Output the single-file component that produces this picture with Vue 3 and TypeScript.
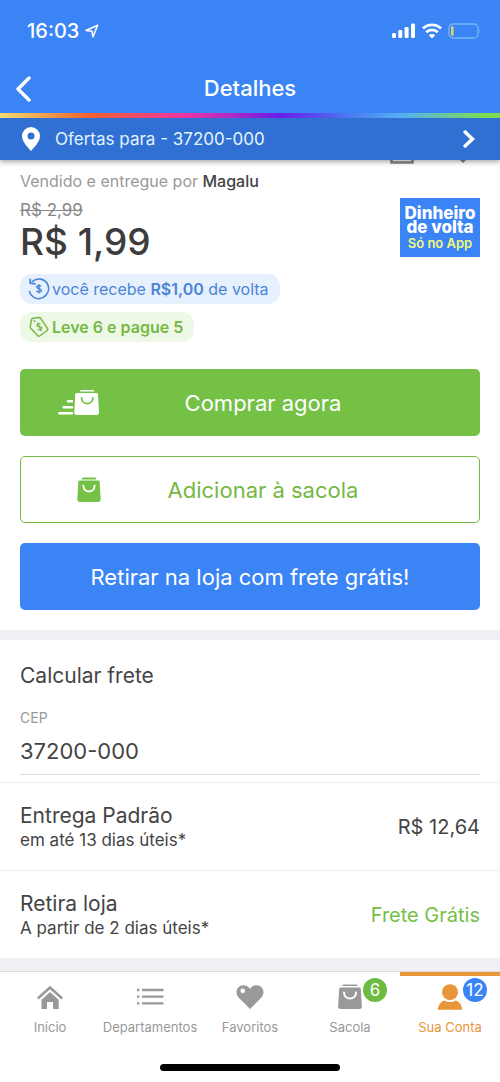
<script setup lang="ts">
import { ref } from 'vue'

interface Tab {
  id: string
  label: string
  badge?: number
  tone?: string
}

interface Shipping {
  name: string
  term: string
  price: string
  free: boolean
}

const cep = ref('37200-000')
const active = ref('conta')

const shipping: Shipping[] = [
  { name: 'Entrega Padrão', term: 'em até 13 dias úteis*', price: 'R$ 12,64', free: false },
  { name: 'Retira loja', term: 'A partir de 2 dias úteis*', price: 'Frete Grátis', free: true },
]

const tabs: Tab[] = [
  { id: 'inicio', label: 'Início' },
  { id: 'departamentos', label: 'Departamentos' },
  { id: 'favoritos', label: 'Favoritos' },
  { id: 'sacola', label: 'Sacola', badge: 6, tone: 'green' },
  { id: 'conta', label: 'Sua Conta', badge: 12, tone: 'blue' },
]
</script>

<template>
  <div class="app">
    <header class="header">
      <div class="status">
        <div class="clock">
          <span>16:03</span>
          <svg width="14" height="14" viewBox="0 0 14 14" aria-hidden="true">
            <path d="M1 6.4 12.6 1.2 8 12.8 6.9 7.2Z" fill="none" stroke="#fff" stroke-width="1.6" stroke-linejoin="round" />
          </svg>
        </div>
        <div class="signals">
          <svg width="24" height="16" viewBox="0 0 24 16" aria-hidden="true">
            <g fill="#fff">
              <rect x="0" y="10" width="4" height="5" rx="1.2" />
              <rect x="6.3" y="7" width="4" height="8" rx="1.2" />
              <rect x="12.6" y="4" width="4" height="11" rx="1.2" />
              <rect x="19" y="0.5" width="4" height="14.5" rx="1.2" />
            </g>
          </svg>
          <svg width="20" height="16" viewBox="0 0 20 16" aria-hidden="true">
            <g fill="none" stroke="#fff" stroke-width="2.8">
              <path d="M1 5.4a13 13 0 0 1 18 0" />
              <path d="M4.2 9.2a8.4 8.4 0 0 1 11.6 0" />
            </g>
            <path d="M10 15.400 6.800 12.200a4.600 4.600 0 0 1 6.400 0Z" fill="#fff" />
          </svg>
          <svg width="34" height="16" viewBox="0 0 34 16" aria-hidden="true">
            <rect x="1" y="1" width="29" height="14" rx="4" fill="none" stroke="#79b4f5" stroke-width="1.3" />
            <rect x="3" y="3.2" width="2.6" height="9.6" rx="1" fill="#d9cf78" />
            <path d="M31.6 5.5q1.6 2.5 0 5Z" fill="#79b4f5" />
          </svg>
        </div>
      </div>
      <div class="titlebar">
        <button class="back" type="button" aria-label="Voltar">
          <svg width="18" height="28" viewBox="0 0 18 28" aria-hidden="true">
            <path d="M15 4 4 15l11 11" fill="none" stroke="#fff" stroke-width="3.4" stroke-linecap="round" stroke-linejoin="round" />
          </svg>
        </button>
        <h1>Detalhes</h1>
        <span></span>
      </div>
      <div class="rainbow"></div>
      <a class="location" href="#cep">
        <svg width="20" height="26" viewBox="0 0 20 26" aria-hidden="true">
          <path fill="#fff" fill-rule="evenodd" d="M10 1a9 9 0 0 1 9 9c0 6-6.500 12-9 15.200C7.500 22 1 16 1 10a9 9 0 0 1 9-9Zm0 5.600a3.500 3.500 0 1 0 0 7 3.500 3.500 0 0 0 0-7Z" />
        </svg>
        <span class="place">Ofertas para - {{ cep }}</span>
        <svg width="14" height="22" viewBox="0 0 14 22" aria-hidden="true">
          <path d="m2 3 8.500 8L2 19" fill="none" stroke="#fff" stroke-width="3.400" />
        </svg>
      </a>
    </header>

    <main class="main">
      <section class="product">
        <div class="actions">
          <svg width="24" height="26" viewBox="0 0 24 26" aria-hidden="true">
            <path d="M1.500 10v14.500h21V10M12 17V2M7 7l5-5 5 5" fill="none" stroke="#82888d" stroke-width="2.500" />
          </svg>
          <svg width="26" height="24" viewBox="0 0 26 24" aria-hidden="true">
            <path d="M13 23 3 13C-2 6 7-2 13 5c6-7 15 1 10 8Z" fill="#82888d" />
          </svg>
        </div>
        <p class="seller">Vendido e entregue por <b>Magalu</b></p>
        <div class="pricing">
          <div>
            <s class="old">R$ 2,99</s>
            <p class="price">R$ 1,99</p>
          </div>
          <div class="promo">
            <span>Dinheiro<br />de volta</span>
            <em>Só no App</em>
          </div>
        </div>
        <div class="pills">
          <p class="pill cashback">
            <svg width="22" height="22" viewBox="0 0 22 22" aria-hidden="true">
              <path d="M3.800 3.800C9-.6 16.200.6 19.200 5.500c5 8.500-4.700 19.200-13.700 13.600Q2.200 17 1.300 12.800" fill="none" stroke="currentColor" stroke-width="1.600" />
              <path d="M2.200.8v4.400l5.600.8" fill="none" stroke="currentColor" stroke-width="1.700" />
              <path d="M13.200 8.500c-.5-1.200-4.400-1.700-4.400.4 0 2.300 4.600 1.100 4.600 3.600 0 2.200-4.300 1.900-4.900.2M11 6.300v9.200" fill="none" stroke="currentColor" stroke-width="1.400" />
            </svg>
            <span>você recebe <b>R$1,00</b> de volta</span>
          </p>
          <p class="pill deal">
            <svg width="22" height="22" viewBox="0 0 22 22" aria-hidden="true">
              <path d="M2.300 10.500 3.600 3.400q.3-1 1.300-1.200l6.300-.7q1 0 1.500.8l6.900 10.300q.7 1.100-.4 1.900l-7.600 5.500q-1.200.8-2-.4L2.700 12.200q-.5-.8-.4-1.700Z" fill="none" stroke="currentColor" stroke-width="1.500" stroke-linejoin="round" />
              <circle cx="6.500" cy="5" r="1" fill="currentColor" />
              <path d="M12.500 8.200c-1.200-1.300-4.200-.1-3.500 1.600.8 1.900 4.100-.2 4.800 1.900.6 1.900-2.800 3-4.100 1.400M9.500 6.500l3.800 8.800" fill="none" stroke="currentColor" stroke-width="1.200" />
            </svg>
            <b>Leve 6 e pague 5</b>
          </p>
        </div>
        <div class="buttons">
          <button class="btn buy" type="button">
            <svg width="42" height="28" viewBox="0 0 42 28" aria-hidden="true">
              <path d="M21.500 2.600q.2-1.600 1.800-1.600h11.400q1.600 0 1.800 1.600Z" fill="#fff" />
              <path d="M19.500 4h19q1.300 0 1.400 1.300l1.100 18.200q0 2.500-2.500 2.500H18.700q-2.500 0-2.400-2.500l1-18.200Q17.500 4 19.500 4Z" fill="#fff" />
              <path d="M23.500 9c.4 7.400 11 7.400 11.400 0" fill="none" stroke="#75c146" stroke-width="1.800" stroke-linecap="round" />
              <path d="M10 12.300h4M5.500 18.300h8.500M1.300 24.300h12.700" fill="none" stroke="#fff" stroke-width="2.400" stroke-linecap="round" />
            </svg>
            <span>Comprar agora</span>
          </button>
          <button class="btn add" type="button">
            <svg width="24" height="26" viewBox="0 0 24 26" aria-hidden="true">
              <path d="M4.500 2.400q.2-1.900 1.800-1.900h11.400q1.600 0 1.800 1.900Z" fill="#75c146" />
              <path d="M2.700 3.600h18.600q1.300 0 1.400 1.300l1 17.700q0 2.400-2.400 2.400H2.700q-2.400 0-2.400-2.400l1-17.700q.1-1.300 1.400-1.300Z" fill="#75c146" />
              <path d="M6.300 8.600c.4 7.800 11 7.800 11.400 0" fill="none" stroke="#fff" stroke-width="1.900" stroke-linecap="round" />
            </svg>
            <span>Adicionar à sacola</span>
          </button>
          <button class="btn pickup" type="button">Retirar na loja com frete grátis!</button>
        </div>
      </section>

      <section class="freight">
        <form class="calc" @submit.prevent>
          <h2>Calcular frete</h2>
          <label for="cep">CEP</label>
          <input id="cep" v-model="cep" type="text" inputmode="numeric" />
        </form>
        <ul>
          <li v-for="s in shipping" :key="s.name">
            <div>
              <strong>{{ s.name }}</strong>
              <small>{{ s.term }}</small>
            </div>
            <span class="cost" :class="{ free: s.free }">{{ s.price }}</span>
          </li>
        </ul>
      </section>
    </main>

    <footer class="footer">
      <nav class="tabs">
        <button v-for="t in tabs" :key="t.id" type="button" class="tab" :class="{ active: t.id === active }" @click="active = t.id">
          <span class="icon">
            <svg v-if="t.id === 'inicio'" width="28" height="26" viewBox="0 0 28 26" aria-hidden="true">
              <path d="m1.800 14.500 12.200-11 12.200 11" fill="none" stroke="currentColor" stroke-width="2.600" />
              <path d="m14 8 8.700 7.800V25H17v-7h-6v7H5.500v-9.200Z" fill="currentColor" />
            </svg>
            <svg v-else-if="t.id === 'departamentos'" width="28" height="26" viewBox="0 0 28 26" aria-hidden="true">
              <path d="M1 6h2.400M6 6h21.500M1 12.700h2.400M6 12.700h21.500M1 19.400h2.400M6 19.400h21.500" fill="none" stroke="currentColor" stroke-width="2.300" />
            </svg>
            <svg v-else-if="t.id === 'favoritos'" width="28" height="26" viewBox="0 0 28 26" aria-hidden="true">
              <path fill="currentColor" fill-rule="evenodd" d="M14 25 2.800 13.800C-1.800 8.500 1.300 1.300 7.300 1.300c3 0 5.200 1.400 6.700 3.600 1.500-2.200 3.700-3.600 6.700-3.600 6 0 9.100 7.200 4.500 12.500ZM6.700 4.400a2.400 2.400 0 1 0 0 4.800 2.400 2.400 0 0 0 0-4.800Z" />
            </svg>
            <svg v-else-if="t.id === 'sacola'" width="28" height="26" viewBox="0 0 28 26" aria-hidden="true">
              <path d="M6.300 1.900Q6.500.5 8 .5h12q1.500 0 1.700 1.400Z" fill="currentColor" />
              <path d="M4.700 3.500h18.600q1.300 0 1.500 1.300l1.100 17.700q0 2.500-2.500 2.500H4.600q-2.500 0-2.500-2.500L3.200 4.800q.2-1.300 1.500-1.300Z" fill="currentColor" />
              <path d="M8 8.600c.4 8 11.600 8 12 0" fill="none" stroke="#fff" stroke-width="2" stroke-linecap="round" />
            </svg>
            <svg v-else width="28" height="26" viewBox="0 0 28 26" aria-hidden="true">
              <circle cx="14" cy="8.200" r="8" fill="currentColor" />
              <path d="M1.800 25.800c.2-4.600 2.800-8 6.400-9.400q5.800 3 11.600 0c3.600 1.400 6.200 4.800 6.400 9.400Z" fill="currentColor" />
            </svg>
            <span v-if="t.badge" class="badge" :class="t.tone">{{ t.badge }}</span>
          </span>
          <span class="label">{{ t.label }}</span>
        </button>
      </nav>
      <div class="home"></div>
    </footer>
  </div>
</template>

<style>
body {
  margin: 0;
  background: #fff;
}
</style>

<style scoped>
.app {
  display: flex;
  flex-direction: column;
  min-height: 100vh;
  color: #444;
  font-family: Inter, "Liberation Sans", sans-serif;
  background: #fff;
}
h1, h2, p, ul {
  margin: 0;
  padding: 0;
  list-style: none;
}
svg {
  display: block;
  flex: none;
}
button, input {
  margin: 0;
  padding: 0;
  border: 0;
  background: none;
  color: inherit;
  font: inherit;
}
b {
  font-weight: 600;
}
.header {
  color: #fff;
  background: #3b84f5;
  box-shadow: 0 2px 5px rgba(0, 0, 0, 0.35);
  z-index: 1;
}
.status {
  display: flex;
  justify-content: space-between;
  align-items: center;
  height: 62px;
  padding: 0 18px 0 27px;
}
.clock {
  display: flex;
  align-items: center;
  gap: 6px;
  font-size: 20px;
  font-weight: 500;
}
.signals {
  display: flex;
  align-items: center;
  gap: 6px;
}
.titlebar {
  display: grid;
  grid-template-columns: 1fr auto 1fr;
  align-items: center;
  height: 51px;
  padding: 0 14px;
}
.back {
  justify-self: start;
}
h1 {
  font-size: 22px;
  line-height: 28px;
  font-weight: 500;
}
.rainbow {
  height: 5px;
  background: linear-gradient(90deg, #f0dc70, #f0612c 18%, #ee35a5 37%, #6a1ce8 56%, #4a80f2 71%, #56aef5 80%, #7cdc50 97%);
}
.location {
  display: flex;
  align-items: center;
  height: 42px;
  padding: 0 24px 0 21px;
  color: #e4f3ff;
  font-size: 17px;
  text-decoration: none;
  background: #2f70d2;
}
.place {
  flex: 1;
  padding-left: 14px;
}
.main {
  flex: 1;
  background: #f0f0f4;
}
.product {
  padding: 0 20px 20px;
  background: #fff;
}
.actions {
  display: flex;
  justify-content: flex-end;
  align-items: flex-end;
  gap: 36px;
  height: 4px;
  padding-right: 4px;
  overflow: hidden;
}
.seller {
  margin-top: 6px;
  color: #999;
  font-size: 16px;
  line-height: 22px;
}
.seller b {
  color: #444;
  font-weight: 500;
}
.pricing {
  display: flex;
  justify-content: space-between;
  align-items: flex-start;
  margin-top: 6px;
}
.old {
  display: block;
  color: #888;
  font-size: 17px;
  line-height: 24px;
}
.price {
  color: #3c3c3c;
  font-size: 37px;
  line-height: 40px;
  font-weight: 500;
}
.promo {
  display: flex;
  flex-direction: column;
  align-items: center;
  justify-content: center;
  width: 80px;
  height: 59px;
  color: #fff;
  font-size: 17px;
  line-height: 14px;
  font-weight: 800;
  text-align: center;
  background: #3b84f5;
}
.promo em {
  margin-top: 2px;
  color: #f5fa7a;
  font-size: 13px;
  font-style: normal;
  font-weight: 600;
}
.pills {
  display: flex;
  flex-direction: column;
  align-items: flex-start;
  gap: 8px;
  margin-top: 12px;
}
.pill {
  display: flex;
  align-items: center;
  gap: 2px;
  height: 30px;
  padding: 0 11px 0 8px;
  border-radius: 12px;
  font-size: 16px;
}
.cashback {
  color: #4a84d8;
  background: #e7f1fd;
}
.deal {
  color: #75b843;
  background: #edf8e6;
}
.buttons {
  display: flex;
  flex-direction: column;
  gap: 20px;
  margin-top: 27px;
}
.btn {
  display: grid;
  grid-template-columns: 60px 1fr 34px;
  align-items: center;
  box-sizing: border-box;
  height: 67px;
  padding: 0 20px;
  border-radius: 5px;
  font-size: 22px;
  cursor: pointer;
}
.btn svg {
  justify-self: end;
}
.buy {
  color: #fff;
  background: #75c146;
}
.add {
  color: #75b843;
  border: 1px solid #75b843;
}
.pickup {
  display: block;
  color: #fff;
  background: #3b84f5;
}
.freight {
  margin: 10px 0 12px;
  background: #fff;
}
.calc {
  display: flex;
  flex-direction: column;
  padding: 21px 20px 7px;
}
h2 {
  font-size: 21px;
  line-height: 30px;
  font-weight: 400;
}
.calc label {
  margin-top: 17px;
  color: #999;
  font-size: 14px;
  line-height: 20px;
}
.calc input {
  height: 46px;
  border-bottom: 1px solid #ddd;
  border-radius: 0;
  font-size: 22px;
  outline: none;
}
li {
  display: flex;
  justify-content: space-between;
  align-items: center;
  box-sizing: border-box;
  height: 88px;
  padding: 0 20px;
  border-top: 1px solid #eee;
}
li strong, li small {
  display: block;
  font-weight: 400;
}
li strong {
  font-size: 21px;
  line-height: 26px;
}
li small {
  font-size: 17px;
  line-height: 22px;
}
.cost {
  font-size: 20px;
}
.free {
  color: #75c146;
}
.footer {
  padding-bottom: 11px;
  background: #fff;
}
.tabs {
  display: grid;
  grid-template-columns: repeat(5, 1fr);
  border-top: 1px solid #ddd;
}
.tab {
  display: flex;
  flex-direction: column;
  align-items: center;
  height: 70px;
  padding-top: 8px;
  border-top: 4px solid transparent;
  color: #999;
  box-sizing: border-box;
}
.tab.active {
  color: #e8963a;
  border-top-color: #e8963a;
}
.icon {
  position: relative;
}
.label {
  margin-top: 8px;
  font-size: 13px;
  line-height: 18px;
}
.badge {
  position: absolute;
  left: 27px;
  top: -6px;
  width: 24px;
  height: 24px;
  border-radius: 50%;
  color: #fff;
  font-size: 17px;
  line-height: 24px;
  text-align: center;
}
.green {
  background: #6dbb40;
}
.blue {
  background: #3b84f5;
}
.home {
  width: 36%;
  height: 7px;
  margin: 22px auto 0;
  border-radius: 4px;
  background: #000;
}
</style>
